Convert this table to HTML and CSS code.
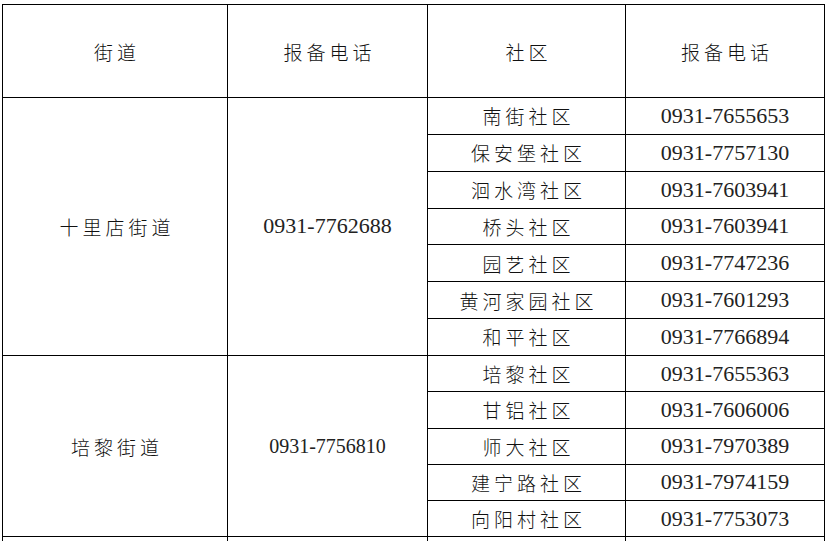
FILE: index.html
```html
<!DOCTYPE html>
<html lang="zh-CN">
<head>
<meta charset="utf-8">
<link rel="stylesheet" href="styles.css">
</head>
<body>
<table class="grid">
  <colgroup>
    <col class="c1"><col class="c2"><col class="c3"><col class="c4">
  </colgroup>
  <tr class="head">
    <td class="cjk">街道</td>
    <td class="cjk">报备电话</td>
    <td class="cjk">社区</td>
    <td class="cjk">报备电话</td>
  </tr>
  <tr class="r1">
    <td class="cjk" rowspan="7">十里店街道</td>
    <td class="num" rowspan="7">0931-7762688</td>
    <td class="cjk">南街社区</td><td class="num">0931-7655653</td>
  </tr>
  <tr class="r1"><td class="cjk">保安堡社区</td><td class="num">0931-7757130</td></tr>
  <tr class="r1"><td class="cjk">洄水湾社区</td><td class="num">0931-7603941</td></tr>
  <tr class="r1"><td class="cjk">桥头社区</td><td class="num">0931-7603941</td></tr>
  <tr class="r1"><td class="cjk">园艺社区</td><td class="num">0931-7747236</td></tr>
  <tr class="r1"><td class="cjk">黄河家园社区</td><td class="num">0931-7601293</td></tr>
  <tr class="r1"><td class="cjk">和平社区</td><td class="num">0931-7766894</td></tr>
  <tr class="r2">
    <td class="cjk" rowspan="5">培黎街道</td>
    <td class="num sm" rowspan="5">0931-7756810</td>
    <td class="cjk">培黎社区</td><td class="num">0931-7655363</td>
  </tr>
  <tr class="r2"><td class="cjk">甘铝社区</td><td class="num">0931-7606006</td></tr>
  <tr class="r2"><td class="cjk">师大社区</td><td class="num">0931-7970389</td></tr>
  <tr class="r2"><td class="cjk">建宁路社区</td><td class="num">0931-7974159</td></tr>
  <tr class="r2"><td class="cjk">向阳村社区</td><td class="num">0931-7753073</td></tr>
  <tr class="tail"><td></td><td></td><td></td><td></td></tr>
</table>
</body>
</html>
```
FILE: styles.css
```css
html, body {
  margin: 0;
  padding: 0;
  background: #fff;
  overflow: hidden;
}
body {
  padding: 4px 0 0 2px;
  height: 541px;
  box-sizing: border-box;
}
.grid {
  border-collapse: collapse;
  table-layout: fixed;
  width: 822px;
  color: #111;
}
.c1 { width: 225px; }
.c2 { width: 200px; }
.c3 { width: 198px; }
.c4 { width: 199px; }
.grid td {
  border: 1px solid #000;
  padding: 0;
  text-align: center;
  vertical-align: middle;
}
.head { height: 93px; }
.r1 { height: 36.85px; }
.r2 { height: 36.3px; }
.tail { height: 4px; }
.grid .tail td { border-bottom: 0; }
.cjk {
  font-family: "Noto Sans CJK SC", "Noto Sans", sans-serif;
  font-weight: 300;
  font-size: 19px;
  letter-spacing: 4px;
  text-indent: 4px;
  line-height: 1;
}
.num {
  font-family: "Liberation Serif", "DejaVu Serif", serif;
  font-size: 22px;
  line-height: 1;
  color: #222;
}
.num.sm { font-size: 20px; }
```
